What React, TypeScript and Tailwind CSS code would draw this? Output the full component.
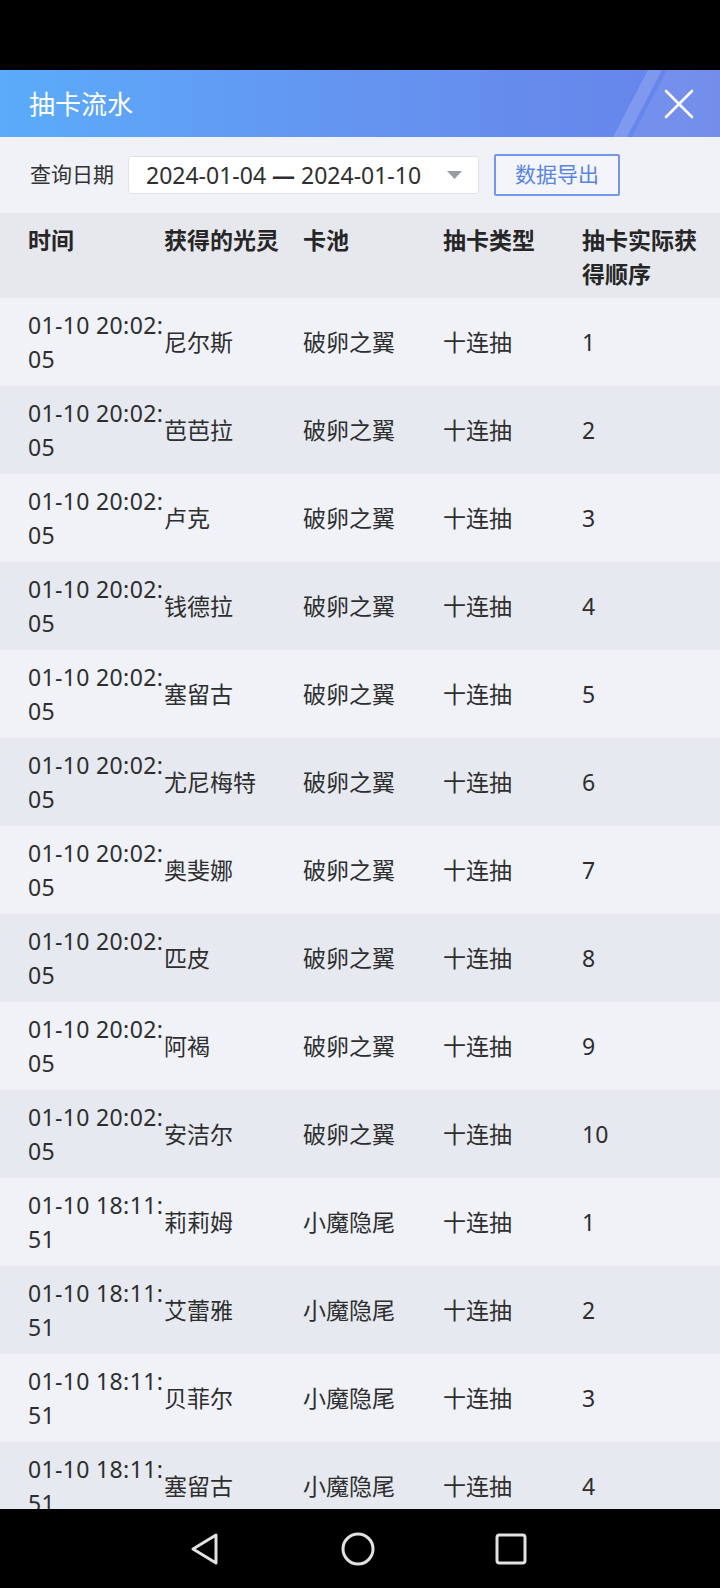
import React from "react";

const rows = [
    { time: "01-10 20:02:05", name: "尼尔斯", pool: "破卵之翼", type: "十连抽", order: 1 },
    { time: "01-10 20:02:05", name: "芭芭拉", pool: "破卵之翼", type: "十连抽", order: 2 },
    { time: "01-10 20:02:05", name: "卢克", pool: "破卵之翼", type: "十连抽", order: 3 },
    { time: "01-10 20:02:05", name: "钱德拉", pool: "破卵之翼", type: "十连抽", order: 4 },
    { time: "01-10 20:02:05", name: "塞留古", pool: "破卵之翼", type: "十连抽", order: 5 },
    { time: "01-10 20:02:05", name: "尤尼梅特", pool: "破卵之翼", type: "十连抽", order: 6 },
    { time: "01-10 20:02:05", name: "奥斐娜", pool: "破卵之翼", type: "十连抽", order: 7 },
    { time: "01-10 20:02:05", name: "匹皮", pool: "破卵之翼", type: "十连抽", order: 8 },
    { time: "01-10 20:02:05", name: "阿褐", pool: "破卵之翼", type: "十连抽", order: 9 },
    { time: "01-10 20:02:05", name: "安洁尔", pool: "破卵之翼", type: "十连抽", order: 10 },
    { time: "01-10 18:11:51", name: "莉莉姆", pool: "小魔隐尾", type: "十连抽", order: 1 },
    { time: "01-10 18:11:51", name: "艾蕾雅", pool: "小魔隐尾", type: "十连抽", order: 2 },
    { time: "01-10 18:11:51", name: "贝菲尔", pool: "小魔隐尾", type: "十连抽", order: 3 },
    { time: "01-10 18:11:51", name: "塞留古", pool: "小魔隐尾", type: "十连抽", order: 4 },
];

const cols = "grid grid-cols-[136px_139px_140px_139px_1fr] pl-[28px] pr-[12px]";

export default function App() {
    return (
        <div className="flex flex-col w-[720px] h-[1588px] bg-black overflow-hidden font-['Noto_Sans','Noto_Sans_CJK_SC',sans-serif]">
            {/* status bar */}
            <div className="h-[70px] shrink-0 bg-black" />

            {/* panel */}
            <div className="flex flex-col flex-1 overflow-hidden bg-[#f0f2f8]">
                {/* title bar */}
                <div className="relative flex items-center justify-between h-[67px] shrink-0 pl-[29px] pr-[26px] bg-gradient-to-r from-[#5aabfa] via-[#6494f0] to-[#6782ea]">
                    <svg className="absolute inset-0" width="720" height="67" viewBox="0 0 720 67">
                        <polygon points="613,67 627,67 662,0 648,0" fill="#ffffff" fillOpacity="0.16" />
                        <polygon points="632,67 720,67 720,0 667,0" fill="#ffffff" fillOpacity="0.09" />
                    </svg>
                    <h1 className="relative text-[26px] text-white leading-none">抽卡流水</h1>
                    <svg className="relative" width="30" height="30" viewBox="0 0 30 30">
                        <path d="M2 2 L28 28 M28 2 L2 28" stroke="#ffffff" strokeWidth="2.6" strokeLinecap="round" />
                    </svg>
                </div>

                {/* filter row */}
                <div className="flex items-center h-[76px] shrink-0 pl-[30px]">
                    <span className="text-[21px] text-[#333]">查询日期</span>
                    <div className="flex items-center justify-between ml-[14px] w-[351px] h-[38px] pl-[17px] pr-[16px] bg-white border border-[#e0e3ea] rounded-[3px]">
                        <span className="text-[23px] text-[#2f2f2f] whitespace-nowrap">2024-01-04 <span className="font-bold">—</span> 2024-01-10</span>
                        <svg width="15" height="8" viewBox="0 0 15 8">
                            <path d="M0 0 L15 0 L7.5 8 Z" fill="#9a9ca3" />
                        </svg>
                    </div>
                    <button className="ml-[15px] w-[126px] h-[42px] border-2 border-[#7398e8] rounded-[2px] text-[21px] text-[#5a84e0] bg-[#f3f5fb]">
                        数据导出
                    </button>
                </div>

                {/* table header */}
                <div className={`${cols} shrink-0 pt-[10px] pb-[7px] bg-[#e6e8ee] text-[23px] leading-[34px] font-bold text-[#262626]`}>
                    <div>时间</div>
                    <div>获得的光灵</div>
                    <div>卡池</div>
                    <div>抽卡类型</div>
                    <div>抽卡实际获得顺序</div>
                </div>

                {/* table body */}
                {rows.map((r, i) => (
                    <div
                        key={i}
                        className={`${cols} shrink-0 items-center py-[10px] text-[23px] leading-[34px] text-[#2e2e2e] ${i % 2 === 0 ? "bg-[#f0f2f8]" : "bg-[#e7e9f0]"}`}
                    >
                        <div className="break-all tracking-[0.35px]">{r.time}</div>
                        <div>{r.name}</div>
                        <div>{r.pool}</div>
                        <div>{r.type}</div>
                        <div>{r.order}</div>
                    </div>
                ))}
            </div>

            {/* nav bar */}
            <div className="flex items-center h-[79px] shrink-0 bg-black">
                <div className="flex items-center justify-center w-full">
                    <svg className="ml-[-3px]" width="30" height="34" viewBox="0 0 30 34">
                        <path d="M26 3 L26 31 L3 17 Z" fill="none" stroke="#e2e2e2" strokeWidth="3" strokeLinejoin="round" />
                    </svg>
                    <svg className="ml-[121px]" width="34" height="34" viewBox="0 0 34 34">
                        <circle cx="17" cy="17" r="15" fill="none" stroke="#e2e2e2" strokeWidth="3" />
                    </svg>
                    <svg className="ml-[120px]" width="32" height="32" viewBox="0 0 32 32">
                        <rect x="2" y="2" width="28" height="28" rx="2.5" fill="none" stroke="#e2e2e2" strokeWidth="3" />
                    </svg>
                </div>
            </div>
        </div>
    );
}
